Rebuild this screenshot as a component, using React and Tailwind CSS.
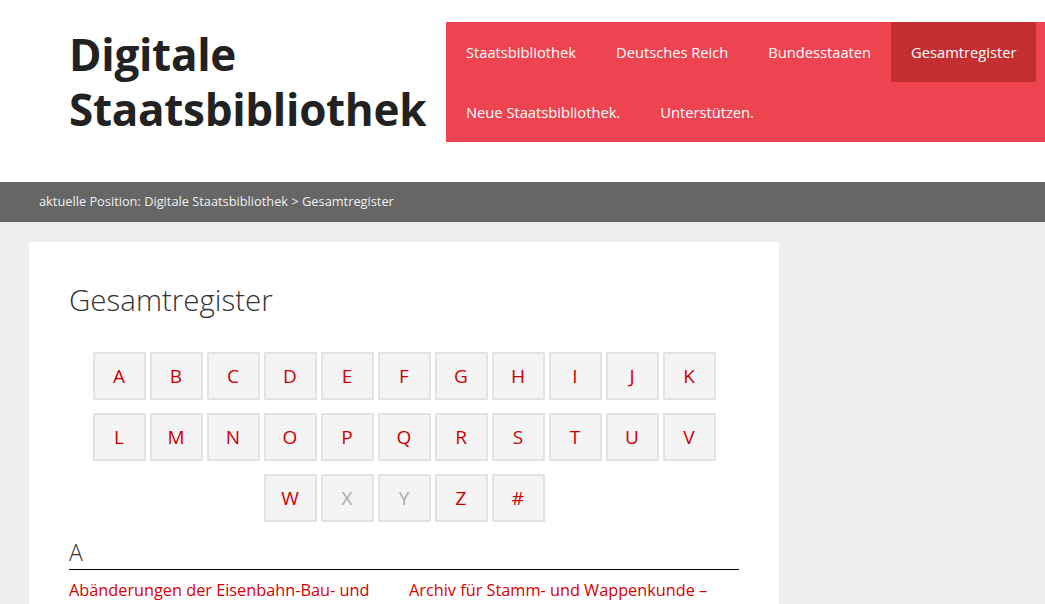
import React from "react";

const row1 = ["A","B","C","D","E","F","G","H","I","J","K"];
const row2 = ["L","M","N","O","P","Q","R","S","T","U","V"];
const row3 = ["W","X","Y","Z","#"];
const disabled = ["X","Y"];

function Letter({ l }) {
  const off = disabled.includes(l);
  return (
    <div className={`w-[53px] h-[48px] flex items-center justify-center bg-[#f4f4f4] border-2 border-[#e3e3e3] text-[19px] ${off ? "text-[#ababab]" : "text-[#cc0000]"}`} style={{ fontFamily: '"Open Sans", sans-serif' }}>
      {l}
    </div>
  );
}

export default function App() {
  const font = { fontFamily: '"Open Sans", "Noto Sans", sans-serif' };
  return (
    <div className="w-[1045px] h-[604px] overflow-hidden bg-[#efefef]" style={font}>
      <header className="bg-white h-[182px] flex">
        <div className="pl-[69px] pt-[27px] w-[446px] shrink-0">
          <h1 className="text-[44px] leading-[55px] font-bold text-[#222] tracking-[-0.3px] whitespace-nowrap">Digitale<br />Staatsbibliothek</h1>
        </div>
        <nav className="mt-[22px] h-[120px] flex-1 bg-[#ee4452] flex flex-wrap content-start text-white text-[14.7px]">
          <a className="h-[60px] px-[20px] flex items-center">Staatsbibliothek</a>
          <a className="h-[60px] px-[20px] flex items-center">Deutsches Reich</a>
          <a className="h-[60px] px-[20px] flex items-center">Bundesstaaten</a>
          <a className="h-[60px] px-[20px] flex items-center bg-[#c32e31]">Gesamtregister</a>
          <a className="h-[60px] px-[20px] flex items-center">Neue Staatsbibliothek.</a>
          <a className="h-[60px] px-[20px] flex items-center">Unterstützen.</a>
        </nav>
      </header>
      <div className="h-[40px] bg-[#666666] flex items-center pl-[39px] text-[12.8px] text-[#f0f0f0]">
        aktuelle Position: Digitale Staatsbibliothek &gt; Gesamtregister
      </div>
      <div className="pt-[20px] pl-[29px]">
        <main className="w-[750px] h-[400px] bg-white px-[40px] pt-[40px]">
          <h2 className="text-[29.5px] font-light text-[#333] leading-[36px]">Gesamtregister</h2>
          <div className="mt-[34px] flex flex-col gap-[13px] items-center">
            <div className="flex gap-[4px]">{row1.map(l => <Letter key={l} l={l} />)}</div>
            <div className="flex gap-[4px]">{row2.map(l => <Letter key={l} l={l} />)}</div>
            <div className="flex gap-[4px]">{row3.map(l => <Letter key={l} l={l} />)}</div>
          </div>
          <h3 className="mt-[14px] text-[23px] font-light text-[#333] leading-[32px] border-b border-black pb-[1px]">A</h3>
          <div className="grid grid-cols-[340px_1fr] mt-[8px] text-[16.3px] text-[#d50000]">
            <a>Abänderungen der Eisenbahn-Bau- und</a>
            <a>Archiv für Stamm- und Wappenkunde –</a>
          </div>
        </main>
      </div>
    </div>
  );
}
